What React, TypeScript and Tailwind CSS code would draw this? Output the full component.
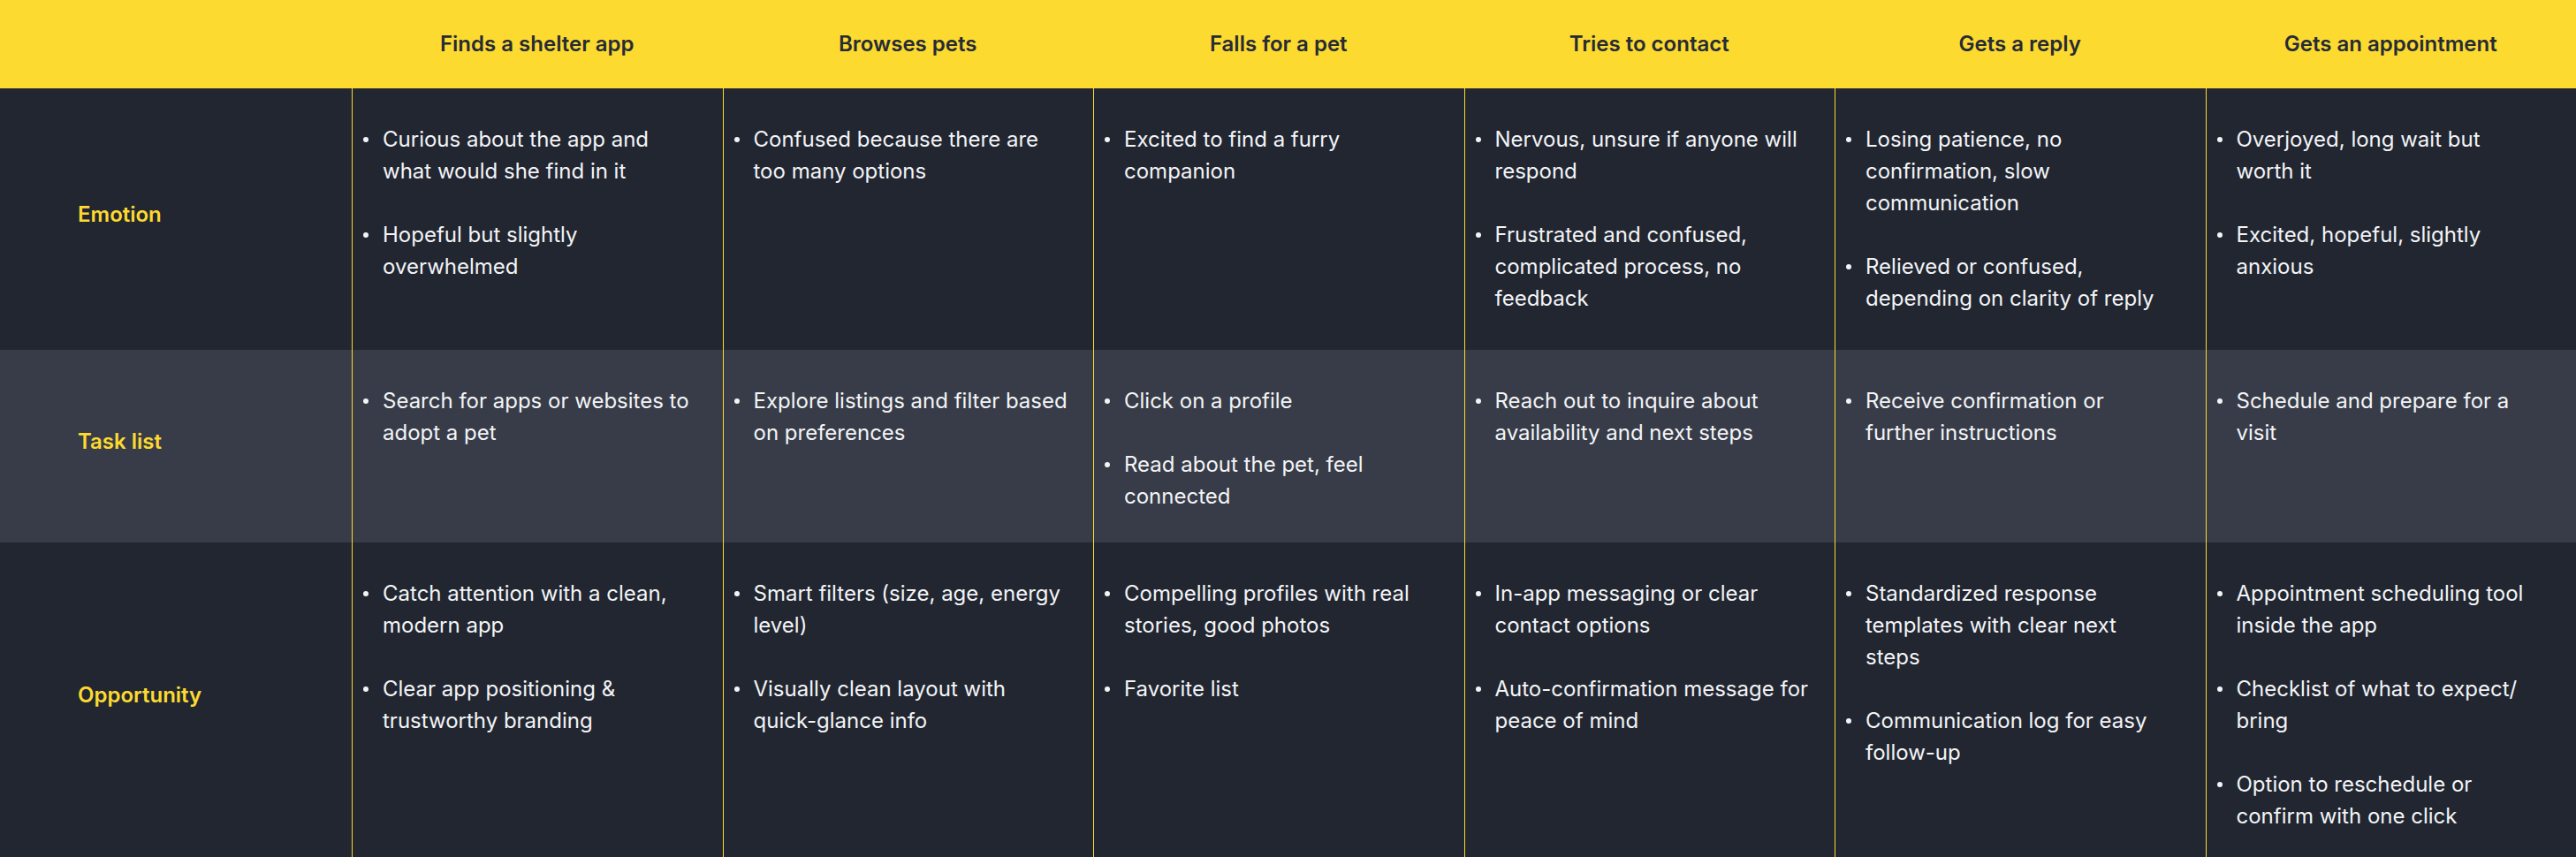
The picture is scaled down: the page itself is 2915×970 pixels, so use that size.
import React from 'react';

const stages = [
  'Finds a shelter app',
  'Browses pets',
  'Falls for a pet',
  'Tries to contact',
  'Gets a reply',
  'Gets an appointment',
];

const rows = [
  {
    label: 'Emotion',
    height: 'h-[296px]',
    bg: 'bg-[#212631]',
    cells: [
      ['Curious about the app and what would she find in it', 'Hopeful but slightly overwhelmed'],
      ['Confused because there are too many options'],
      ['Excited to find a furry companion'],
      ['Nervous, unsure if anyone will respond', 'Frustrated and confused, complicated process, no feedback'],
      ['Losing patience, no confirmation, slow communication', 'Relieved or confused, depending on clarity of reply'],
      ['Overjoyed, long wait but worth it', 'Excited, hopeful, slightly anxious'],
    ],
  },
  {
    label: 'Task list',
    height: 'h-[218px]',
    bg: 'bg-[#373c48]',
    cells: [
      ['Search for apps or websites to adopt a pet'],
      ['Explore listings and filter based on preferences'],
      ['Click on a profile', 'Read about the pet, feel connected'],
      ['Reach out to inquire about availability and next steps'],
      ['Receive confirmation or further instructions'],
      ['Schedule and prepare for a visit'],
    ],
  },
  {
    label: 'Opportunity',
    height: 'h-[356px]',
    bg: 'bg-[#212631]',
    cells: [
      ['Catch attention with a clean, modern app', 'Clear app positioning & trustworthy branding'],
      ['Smart filters (size, age, energy level)', 'Visually clean layout with quick-glance info'],
      ['Compelling profiles with real stories, good photos', 'Favorite list'],
      ['In-app messaging or clear contact options', 'Auto-confirmation message for peace of mind'],
      ['Standardized response templates with clear next steps', 'Communication log for easy follow-up'],
      ['Appointment scheduling tool inside the app', 'Checklist of what to expect/ bring', 'Option to reschedule or confirm with one click'],
    ],
  },
];

export default function App() {
  return (
    <div className="w-[2915px] h-[970px] overflow-hidden bg-[#212631] font-['Inter',sans-serif]">
      {/* stage header */}
      <div className="grid grid-cols-[398px_repeat(6,1fr)] h-[100px] bg-[#fdda30]">
        <div />
        {stages.map((s) => (
          <div key={s} className="flex items-center justify-center text-[24px] font-semibold text-[#262b36]">
            {s}
          </div>
        ))}
      </div>

      {rows.map((row) => (
        <div key={row.label} className={`grid grid-cols-[398px_repeat(6,1fr)] ${row.height} ${row.bg}`}>
          <div className="flex items-center pl-[88px] pb-[10px] text-[24px] font-semibold text-[#fdda30]">
            {row.label}
          </div>
          {row.cells.map((items, i) => (
            <div key={i} className={`border-l border-[#fdda30] pl-[12px] pt-10 ${i >= 4 ? 'pr-[51px]' : 'pr-[27px]'}`}>
              <ul className="space-y-9">
                {items.map((t) => (
                  <li key={t} className="flex text-[24px] leading-[36px] text-[#f3f4f6]">
                    <span className="w-[22px] shrink-0 pt-[15px]">
                      <span className="block w-[6px] h-[6px] rounded-full bg-[#f3f4f6]" />
                    </span>
                    <span>{t}</span>
                  </li>
                ))}
              </ul>
            </div>
          ))}
        </div>
      ))}
    </div>
  );
}
